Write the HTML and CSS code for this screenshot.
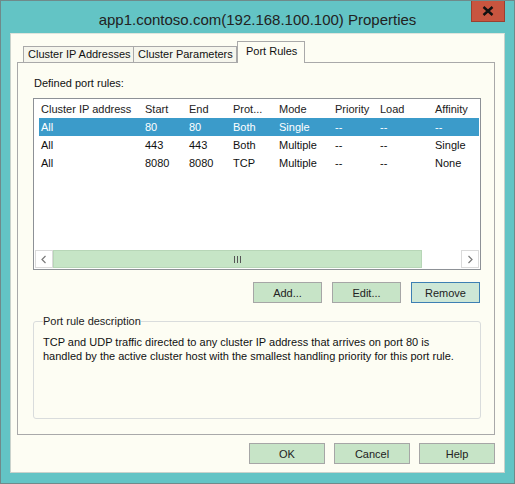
FILE: index.html
```html
<!DOCTYPE html>
<html>
<head>
<meta charset="utf-8">
<link rel="stylesheet" href="styles.css">
</head>
<body>
<div class="window">
  <div class="titlebar">
    <span class="title">app1.contoso.com(192.168.100.100) Properties</span>
    <div class="close">
      <svg width="12" height="10" viewBox="0 0 12 10"><path d="M1.5 1 L10.5 9 M10.5 1 L1.5 9" stroke="#111" stroke-width="2.4" fill="none"/></svg>
    </div>
  </div>
  <div class="client">
    <div class="tabs">
      <div class="tab t1">Cluster IP Addresses</div>
      <div class="tab t2">Cluster Parameters</div>
      <div class="tab active">Port Rules</div>
    </div>
    <div class="panel">
      <div class="label">Defined port rules:</div>
      <div class="listbox">
        <div class="rows">
          <div class="row head"><span>Cluster IP address</span><span>Start</span><span>End</span><span>Prot...</span><span>Mode</span><span>Priority</span><span>Load</span><span>Affinity</span></div>
          <div class="row sel"><span>All</span><span>80</span><span>80</span><span>Both</span><span>Single</span><span>--</span><span>--</span><span>--</span></div>
          <div class="row"><span>All</span><span>443</span><span>443</span><span>Both</span><span>Multiple</span><span>--</span><span>--</span><span>Single</span></div>
          <div class="row"><span>All</span><span>8080</span><span>8080</span><span>TCP</span><span>Multiple</span><span>--</span><span>--</span><span>None</span></div>
        </div>
        <div class="hscroll">
          <div class="arrow"><svg width="8" height="9" viewBox="0 0 8 9"><path d="M5.5 1 L2 4.5 L5.5 8" stroke="#7a7a7a" stroke-width="1.2" fill="none"/></svg></div>
          <div class="thumb"><span class="grip"></span><span class="grip"></span><span class="grip"></span></div>
          <div class="track"></div>
          <div class="arrow"><svg width="8" height="9" viewBox="0 0 8 9"><path d="M2.5 1 L6 4.5 L2.5 8" stroke="#7a7a7a" stroke-width="1.2" fill="none"/></svg></div>
        </div>
      </div>
      <div class="btnrow">
        <div class="btn">Add...</div>
        <div class="btn">Edit...</div>
        <div class="btn focus">Remove</div>
      </div>
      <fieldset class="group">
        <legend>Port rule description</legend>
        <p>TCP and UDP traffic directed to any cluster IP address that arrives on port 80 is<br>handled by the active cluster host with the smallest handling priority for this port rule.</p>
      </fieldset>
    </div>
    <div class="dlgbtns">
      <div class="btn big">OK</div>
      <div class="btn big">Cancel</div>
      <div class="btn big">Help</div>
    </div>
  </div>
</div>
</body>
</html>
```
FILE: styles.css
```css
* { box-sizing: border-box; }
html, body { margin: 0; padding: 0; }
body {
  width: 515px;
  height: 484px;
  font-family: "Liberation Sans", Arial, sans-serif;
  font-size: 11px;
  color: #111;
  background: #63c4c5;
}
.window {
  width: 515px;
  height: 484px;
  border: 1px solid #6f8a8a;
  background: #63c4c5;
  display: flex;
  flex-direction: column;
}
.titlebar {
  height: 32px;
  display: grid;
  grid-template-columns: 1fr auto 1fr;
}
.title {
  grid-column: 2;
  font-size: 15px;
  color: #222;
  padding-top: 10px;
  line-height: 17px;
  white-space: nowrap;
}
.close {
  grid-column: 3;
  justify-self: end;
  align-self: start;
  width: 34px;
  height: 21px;
  margin-right: 9px;
  background: #c8553f;
  border: 1px solid #9a4030;
  border-top: none;
  display: flex;
  align-items: center;
  justify-content: center;
}
.client {
  margin: 0 9px;
  height: 440px;
  background: #fdfdf3;
  padding: 0 9px 0 6px;
  display: flex;
  flex-direction: column;
  border: 1px solid #c9d2cc;
  border-top-color: #dfe5dd;
}
.tabs {
  margin-top: 7px;
  height: 21px;
  display: flex;
  align-items: flex-end;
  padding-left: 6px;
}
.tab {
  height: 16px;
  border: 1px solid #a9a9a9;
  border-bottom: none;
  background: #f5f5ec;
  line-height: 14px;
  padding: 0 4px;
  white-space: nowrap;
}
.t1 { width: 111px; }
.t2 { width: 103px; border-left: none; }
.active {
  height: 22px;
  width: 68px;
  margin-bottom: -1px;
  border-left: 1px solid #a9a9a9;
  background: #fdfdf3;
  position: relative;
  z-index: 1;
  padding: 2px 0 0 8px;
}
.panel {
  height: 373px;
  border: 1px solid #a9a9a9;
  background: #fdfdf3;
  padding: 14px 13px 0 15px;
  display: flex;
  flex-direction: column;
}
.label {
  line-height: 13px;
  padding-left: 1px;
}
.listbox {
  margin-top: 8px;
  height: 172px;
  border: 1px solid #8d9196;
  background: #fff;
  display: flex;
  flex-direction: column;
  padding: 0 1px 1px 1px;
}
.rows {
  flex: 1;
  margin-left: 4px;
}
.row {
  display: grid;
  grid-template-columns: 104px 44px 44px 46px 56px 45px 55px 1fr;
  height: 18px;
  line-height: 18px;
  padding-left: 2px;
  white-space: nowrap;
}
.row.head {
  height: 19px;
  line-height: 20px;
  color: #222;
}
.row.sel {
  background: #3b9bca;
  color: #fff;
}
.hscroll {
  height: 18px;
  display: flex;
}
.arrow {
  width: 18px;
  height: 18px;
  background: #fff;
  border: 1px solid #dadada;
  display: flex;
  align-items: center;
  justify-content: center;
}
.thumb {
  width: 369px;
  background: #c6e5c6;
  border: 1px solid #b7d6b7;
  display: flex;
  align-items: center;
  justify-content: center;
  gap: 2px;
}
.grip {
  width: 1px;
  height: 7px;
  background: #555;
}
.track {
  flex: 1;
  background: #fff;
}
.btnrow {
  margin-top: 12px;
  margin-right: 1px;
  display: flex;
  justify-content: flex-end;
  gap: 10px;
}
.btn {
  width: 69px;
  height: 21px;
  background: #c7e4c7;
  border: 1px solid #a6a6a6;
  display: flex;
  align-items: center;
  justify-content: center;
  color: #222;
}
.btn.focus {
  border-color: #3d7fb3;
  background: #cde7d6;
}
.group {
  margin: 12px 0 0 0;
  border: 1px solid #d9dcdc;
  border-radius: 3px;
  padding: 0 9px 55px 9px;
}
.group legend {
  padding: 0;
  line-height: 13px;
  color: #222;
}
.group p {
  margin: 7px 0 0;
  line-height: 14px;
  white-space: nowrap;
}
.dlgbtns {
  margin-top: 8px;
  display: flex;
  justify-content: flex-end;
  gap: 9px;
  padding-right: 0;
}
.btn.big { width: 76px; }
```
